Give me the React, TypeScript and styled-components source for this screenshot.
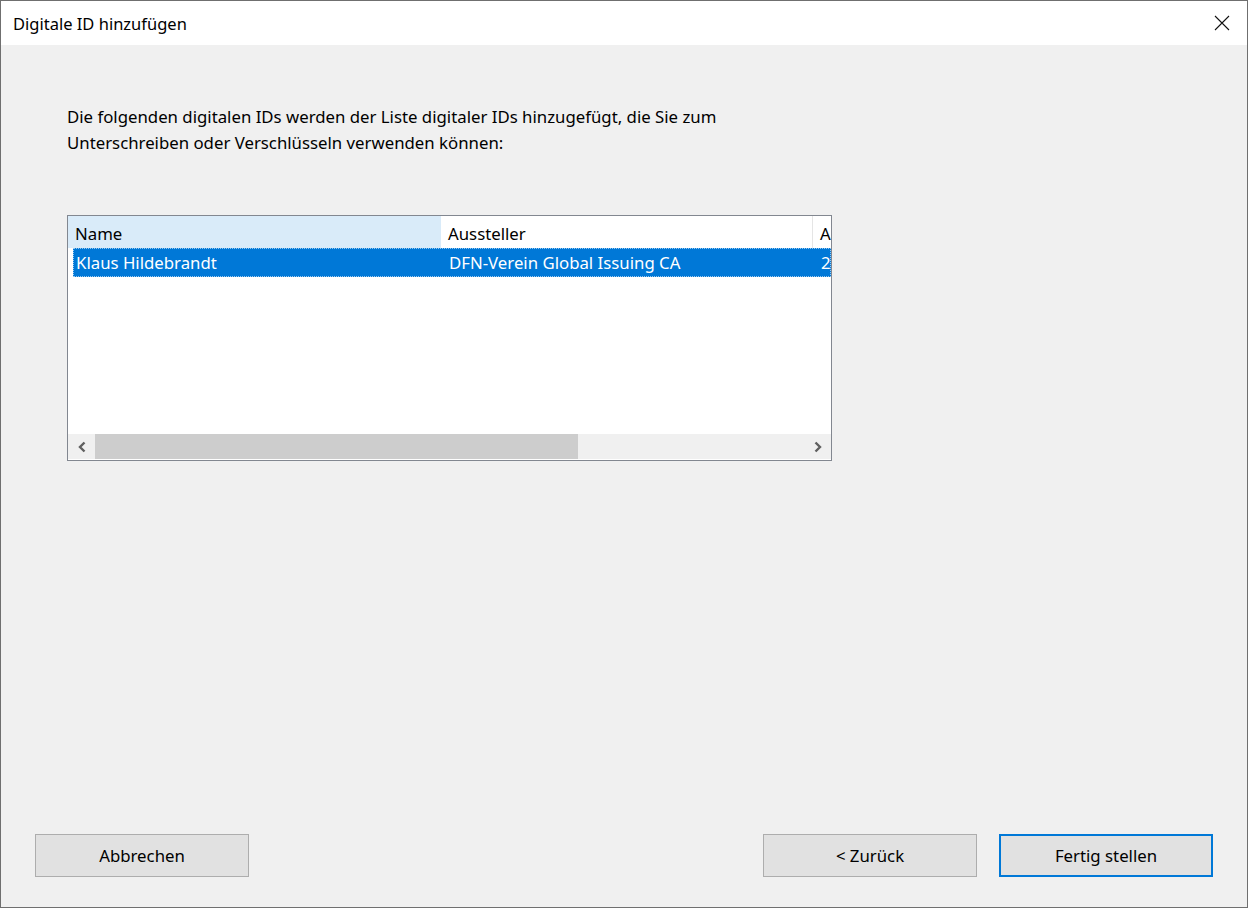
import { createGlobalStyle, styled } from 'styled-components';

const GlobalStyle = createGlobalStyle`
  html, body {
    margin: 0;
    padding: 0;
    background: #f0f0f0;
  }
  * {
    box-sizing: border-box;
  }
`;

export default function App() {
  return (
    <>
      <GlobalStyle />
      <S.Window>
        <S.TitleBar>
          <S.Title>Digitale ID hinzufügen</S.Title>
          <S.CloseButton>
            <svg width="16" height="16" viewBox="0 0 16 16">
              <path d="M1 1 L15 15 M15 1 L1 15" stroke="#111" strokeWidth="1.1" fill="none" />
            </svg>
          </S.CloseButton>
        </S.TitleBar>
        <S.Body>
          <S.Intro>
            Die folgenden digitalen IDs werden der Liste digitaler IDs hinzugefügt, die Sie zum
            <br />
            Unterschreiben oder Verschlüsseln verwenden können:
          </S.Intro>
          <S.ListBox>
            <S.ListArea>
              <S.HeaderRow>
                <S.HeaderCell $width={373} $hot>Name</S.HeaderCell>
                <S.HeaderCell $width={372}>Aussteller</S.HeaderCell>
                <S.HeaderCell $width={20}>A</S.HeaderCell>
              </S.HeaderRow>
              <S.SelectedRow>
                <S.Cell $width={370}>Klaus Hildebrandt</S.Cell>
                <S.Cell $width={372}>DFN-Verein Global Issuing CA</S.Cell>
                <S.Cell $width={20}>2</S.Cell>
              </S.SelectedRow>
            </S.ListArea>
            <S.ScrollBar>
              <S.ArrowButton>
                <svg width="10" height="12" viewBox="0 0 10 12">
                  <path d="M7.5 1.5 L3 6 L7.5 10.5" stroke="#606060" strokeWidth="2.4" fill="none" />
                </svg>
              </S.ArrowButton>
              <S.Track>
                <S.Thumb />
              </S.Track>
              <S.ArrowButton>
                <svg width="10" height="12" viewBox="0 0 10 12">
                  <path d="M2.5 1.5 L7 6 L2.5 10.5" stroke="#606060" strokeWidth="2.4" fill="none" />
                </svg>
              </S.ArrowButton>
            </S.ScrollBar>
          </S.ListBox>
        </S.Body>
        <S.Footer>
          <S.Button>Abbrechen</S.Button>
          <S.ButtonGroup>
            <S.Button>&lt; Zurück</S.Button>
            <S.Button $primary>Fertig stellen</S.Button>
          </S.ButtonGroup>
        </S.Footer>
      </S.Window>
    </>
  );
}

const S = {
  Window: styled.div`
    width: 1248px;
    height: 908px;
    border: 1px solid #6f6f6f;
    background: #f0f0f0;
    display: flex;
    flex-direction: column;
    font-family: 'Noto Sans', 'Open Sans', sans-serif;
    color: #000;
  `,
  TitleBar: styled.div`
    height: 44px;
    background: #fff;
    display: flex;
    align-items: center;
    justify-content: space-between;
    padding-left: 12px;
  `,
  Title: styled.div`
    font-size: 16.5px;
    margin-top: 1px;
  `,
  CloseButton: styled.div`
    width: 46px;
    height: 44px;
    display: flex;
    align-items: center;
    justify-content: center;
    margin-right: 2px;
  `,
  Body: styled.div`
    flex: 1;
    padding: 59px 0 0 66px;
  `,
  Intro: styled.p`
    margin: 0;
    font-size: 16.8px;
    line-height: 26px;
  `,
  ListBox: styled.div`
    margin-top: 59px;
    width: 765px;
    height: 246px;
    border: 1px solid #828790;
    background: #fff;
    display: flex;
    flex-direction: column;
  `,
  ListArea: styled.div`
    flex: 1;
    overflow: hidden;
  `,
  HeaderRow: styled.div`
    height: 32px;
    display: flex;
  `,
  HeaderCell: styled.div<{ $width: number; $hot?: boolean }>`
    flex: 0 0 ${(p) => p.$width}px;
    background: ${(p) => (p.$hot ? '#d9ebf9' : '#fff')};
    border-right: 1px solid ${(p) => (p.$hot ? '#d9ebf9' : '#e5e5e5')};
    font-size: 16.8px;
    display: flex;
    align-items: center;
    padding-left: 7px;
    padding-top: 2px;
    white-space: nowrap;
    overflow: hidden;
  `,
  SelectedRow: styled.div`
    height: 29px;
    margin-left: 5px;
    background: #0078d7;
    outline: 1px dotted #99c9ef;
    outline-offset: -1px;
    display: flex;
    color: #fff;
  `,
  Cell: styled.div<{ $width: number }>`
    flex: 0 0 ${(p) => p.$width}px;
    font-size: 16.8px;
    display: flex;
    align-items: center;
    padding-left: 3px;
    white-space: nowrap;
    overflow: hidden;
    &:not(:first-child) {
      padding-left: 6px;
    }
  `,
  ScrollBar: styled.div`
    height: 25px;
    margin-bottom: 1px;
    display: flex;
    background: #f0f0f0;
  `,
  ArrowButton: styled.div`
    flex: 0 0 27px;
    display: flex;
    align-items: center;
    justify-content: center;
  `,
  Track: styled.div`
    flex: 1;
    display: flex;
  `,
  Thumb: styled.div`
    width: 483px;
    background: #cdcdcd;
  `,
  Footer: styled.div`
    height: 73px;
    display: flex;
    justify-content: space-between;
    align-items: flex-start;
    padding: 0 34px 0 34px;
  `,
  ButtonGroup: styled.div`
    display: flex;
    gap: 22px;
  `,
  Button: styled.button<{ $primary?: boolean }>`
    width: 214px;
    height: 43px;
    background: #e1e1e1;
    border: ${(p) => (p.$primary ? '2px solid #0078d7' : '1px solid #adadad')};
    font-family: 'Noto Sans', 'Open Sans', sans-serif;
    font-size: 16.8px;
    color: #000;
    padding: 0;
  `,
};
